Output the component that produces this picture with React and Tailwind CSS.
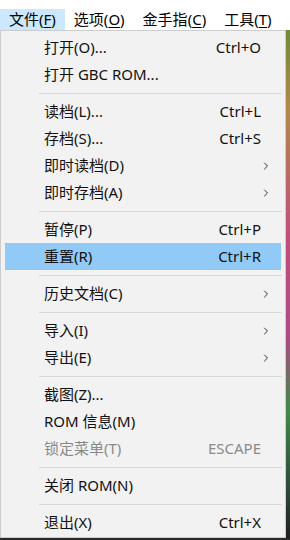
import { ChevronRight } from "lucide-react";

const font = { fontFamily: '"Noto Sans", "Noto Sans CJK SC", sans-serif' };

const menuBar = [
  { label: "文件", key: "F", active: true },
  { label: "选项", key: "O" },
  { label: "金手指", key: "C" },
  { label: "工具", key: "T" },
];

const items = [
  { label: "打开(O)...", shortcut: "Ctrl+O" },
  { label: "打开 GBC ROM..." },
  "sep",
  { label: "读档(L)...", shortcut: "Ctrl+L" },
  { label: "存档(S)...", shortcut: "Ctrl+S" },
  { label: "即时读档(D)", sub: true },
  { label: "即时存档(A)", sub: true },
  "sep",
  { label: "暂停(P)", shortcut: "Ctrl+P" },
  { label: "重置(R)", shortcut: "Ctrl+R", hover: true },
  "sep",
  { label: "历史文档(C)", sub: true },
  "sep",
  { label: "导入(I)", sub: true },
  { label: "导出(E)", sub: true },
  "sep",
  { label: "截图(Z)..." },
  { label: "ROM 信息(M)" },
  { label: "锁定菜单(T)", shortcut: "ESCAPE", disabled: true },
  "sep",
  { label: "关闭 ROM(N)" },
  "sep",
  { label: "退出(X)", shortcut: "Ctrl+X" },
];

function MenuItem({ item }) {
  const color = item.disabled ? "text-[#8a8a8a]" : "text-[#111]";
  return (
    <div className={`flex items-center h-[27px] mx-[4px] ${item.hover ? "bg-[#91c9f7]" : ""} ${color}`}>
      <span className="pl-[39px] flex-1 whitespace-nowrap">{item.label}</span>
      {item.shortcut && <span className="pr-[20px] whitespace-nowrap">{item.shortcut}</span>}
      {item.sub && <ChevronRight className="w-[12px] h-[12px] mr-[9px] text-[#333]" strokeWidth={2} />}
    </div>
  );
}

export default function App() {
  return (
    <div className="w-[290px] h-[540px] bg-[#2a2a2a] overflow-hidden text-[15px]" style={font}>
      <div className="h-[30px] bg-white flex items-end">
        {menuBar.map((m) => (
          <div
            key={m.label}
            className={`h-[21px] flex items-center px-[9px] whitespace-nowrap text-black ${m.active ? "bg-[#cce8ff]" : ""}`}
          >
            {m.label}(<span className="underline underline-offset-2">{m.key}</span>)
          </div>
        ))}
      </div>
      <div className="flex h-[508px]">
        <div className="w-[286px] bg-[#f2f2f2] border border-[#cccccc] pt-[3px] pb-[2px]">
          {items.map((item, i) =>
            item === "sep" ? (
              <div key={i} className="h-[10px] flex items-center">
                <div className="ml-[38px] mr-[3px] flex-1 h-px bg-[#d7d7d7]" />
              </div>
            ) : (
              <MenuItem key={i} item={item} />
            )
          )}
        </div>
        <div className="flex-1 bg-[linear-gradient(to_bottom,#6f8a3a_0%,#b08a4a_15%,#c0507a_40%,#b04a86_60%,#3f8a4a_75%,#2f4a3a_90%,#202020_100%)]" />
      </div>
    </div>
  );
}
